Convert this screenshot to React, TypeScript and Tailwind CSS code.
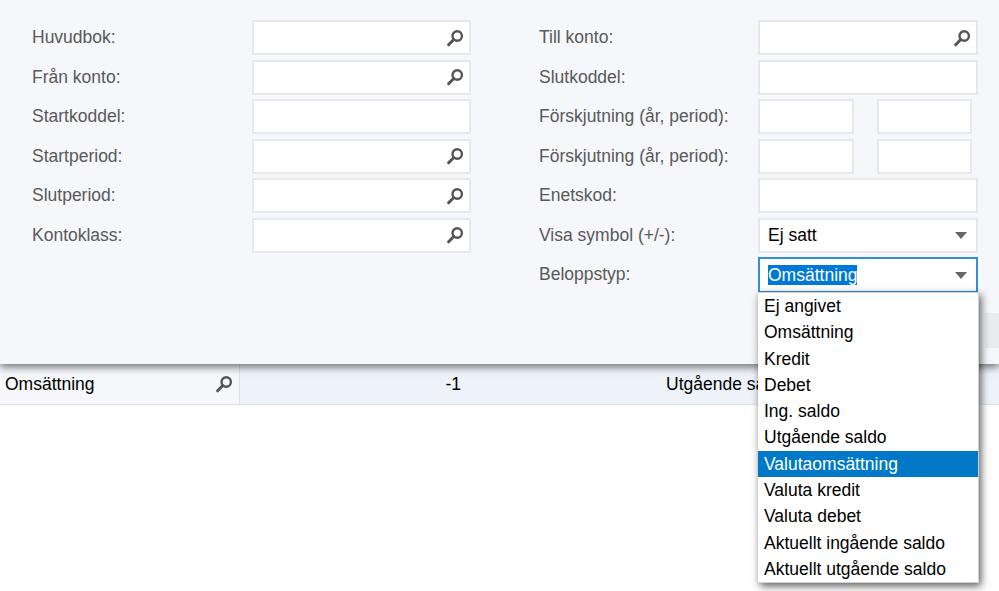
const SearchIcon = () => (
  <svg width="18" height="18" viewBox="0 0 18 18" className="shrink-0">
    <circle cx="11.2" cy="7" r="4.7" fill="none" stroke="#555555" strokeWidth="2.4" />
    <path d="M7.8 10.5 L2.6 15.8" stroke="#555555" strokeWidth="3" strokeLinecap="round" />
  </svg>
);

const Caret = () => (
  <svg width="12" height="7" viewBox="0 0 12 7" className="shrink-0">
    <path d="M0 0 H12 L6 7 Z" fill="#666666" />
  </svg>
);

const Label = ({ children }: { children: string }) => (
  <label className="text-[17.5px] leading-[34.5px] text-[#595959] whitespace-nowrap">{children}</label>
);

const Box = ({ icon, className }: { icon?: boolean; className?: string }) => (
  <div
    className={`h-[35px] bg-white border-2 border-[#e6e8ec] flex items-center justify-end pr-[5px] ${className ?? "w-full"}`}
  >
    {icon && <SearchIcon />}
  </div>
);

const leftRows = [
  { label: "Huvudbok:", icon: true },
  { label: "Från konto:", icon: true },
  { label: "Startkoddel:", icon: false },
  { label: "Startperiod:", icon: true },
  { label: "Slutperiod:", icon: true },
  { label: "Kontoklass:", icon: true },
];

const options = [
  "Ej angivet",
  "Omsättning",
  "Kredit",
  "Debet",
  "Ing. saldo",
  "Utgående saldo",
  "Valutaomsättning",
  "Valuta kredit",
  "Valuta debet",
  "Aktuellt ingående saldo",
  "Aktuellt utgående saldo",
];

export default function App() {
  return (
    <div className="relative w-[999px] h-[591px] overflow-hidden bg-white font-['Liberation_Sans',Arial,sans-serif]">
      <div className="relative z-10 h-[364px] bg-[#f5f7fa] shadow-[0_3px_8px_rgba(0,0,0,0.55)] pt-[20px] pl-[32px] flex">
        <div className="w-[439px] flex flex-col gap-[4.5px]">
          {leftRows.map((row) => (
            <div key={row.label} className="grid grid-cols-[220px_219px]">
              <Label>{row.label}</Label>
              <Box icon={row.icon} />
            </div>
          ))}
        </div>
        <div className="ml-[68px] w-[439px] flex flex-col gap-[4.5px]">
          <div className="grid grid-cols-[219px_220px]">
            <Label>Till konto:</Label>
            <Box icon />
          </div>
          <div className="grid grid-cols-[219px_220px]">
            <Label>Slutkoddel:</Label>
            <Box />
          </div>
          <div className="grid grid-cols-[219px_220px]">
            <Label>Förskjutning (år, period):</Label>
            <div className="flex gap-[23px]">
              <Box className="w-[96px]" />
              <Box className="w-[95px]" />
            </div>
          </div>
          <div className="grid grid-cols-[219px_220px]">
            <Label>Förskjutning (år, period):</Label>
            <div className="flex gap-[23px]">
              <Box className="w-[96px]" />
              <Box className="w-[95px]" />
            </div>
          </div>
          <div className="grid grid-cols-[219px_220px]">
            <Label>Enetskod:</Label>
            <Box />
          </div>
          <div className="grid grid-cols-[219px_220px]">
            <Label>Visa symbol (+/-):</Label>
            <div className="h-[35px] bg-white border-2 border-[#e6e8ec] flex items-center justify-between pl-[8px] pr-[9px] text-[17.5px] text-black">
              <span>Ej satt</span>
              <Caret />
            </div>
          </div>
          <div className="grid grid-cols-[219px_220px]">
            <Label>Beloppstyp:</Label>
            <div className="h-[36px] bg-white border-2 border-[#2f8fdc] flex items-center justify-between pl-[8px] pr-[9px] text-[17.5px] text-black">
              <span className="bg-[#0078d7] text-white leading-[20px]">Omsättning</span>
              <Caret />
            </div>
          </div>
        </div>
        <div className="absolute left-[985px] top-[313px] w-[14px] h-[35px] bg-[#e9ebee]" />
      </div>

      <div className="flex h-[41px] border-b border-[#dfe1e6] text-[17.5px] text-black">
        <div className="w-[240px] shrink-0 bg-[#f5f7fa] border-r border-[#dfe1e6] flex items-center justify-between pl-[5px] pr-[6px]">
          <span>Omsättning</span>
          <SearchIcon />
        </div>
        <div className="flex-1 bg-[#eef3fa] flex items-center">
          <span className="w-[221px] text-right">-1</span>
          <span className="ml-[205px] w-[92px] overflow-hidden whitespace-nowrap">Utgående saldo</span>
        </div>
      </div>

      <ul className="absolute z-20 left-[758px] top-[292px] w-[221px] h-[291px] bg-white text-[17.5px] text-black border-t border-r border-b border-[#d2d2d2] shadow-[2px_3px_8px_rgba(0,0,0,0.65)]">
        {options.map((option) => (
          <li
            key={option}
            className={`h-[26.3px] leading-[26px] pl-[6px] whitespace-nowrap ${
              option === "Valutaomsättning" ? "bg-[#0078c8] text-white" : ""
            }`}
          >
            {option}
          </li>
        ))}
      </ul>
    </div>
  );
}
